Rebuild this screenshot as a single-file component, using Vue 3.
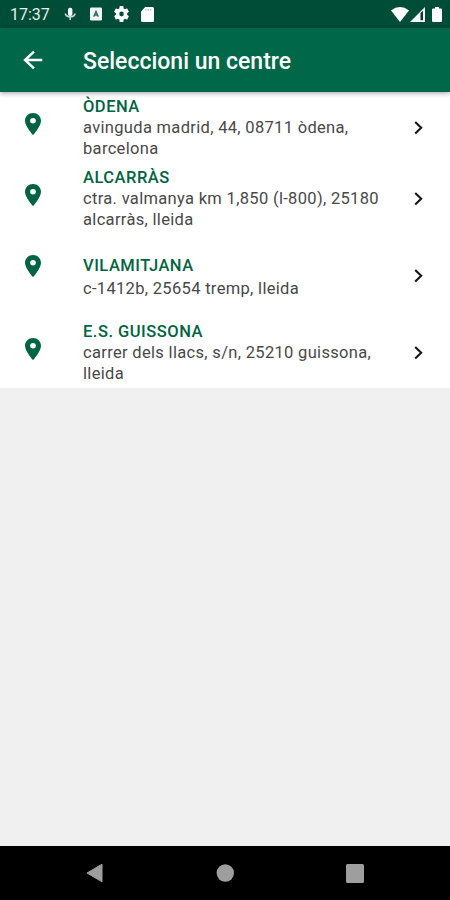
<template>
  <div class="screen">
    <!-- Barra d'estat -->
    <div class="status-bar">
      <span class="time">17:37</span>
      <svg class="status-mic" width="12" height="14" viewBox="0 0 12 14">
        <rect x="4" y="0.8" width="4.4" height="8.2" rx="2" fill="#fff" />
        <path d="M1.2 6.5 Q2.2 9.8 6.2 9.8 T11.2 6.5 M6.2 9.5 V13" fill="none" stroke="#c3d6cf" stroke-width="1.6" />
      </svg>
      <svg class="status-app" width="12" height="14" viewBox="0 0 12 14">
        <rect y="0.5" width="12" height="13" rx="1.3" fill="#f1f5f3" />
        <path d="M3.7 9.8 L6 4.4 L8.3 9.8 M4.6 8 H7.4" fill="none" stroke="#2a6854" stroke-width="1.3" />
      </svg>
      <svg class="status-gear" width="15" height="16" viewBox="2 2 20 20" preserveAspectRatio="none">
        <path
          fill="#fff"
          d="M19.43 12.98c.04-.32.07-.64.07-.98s-.03-.66-.07-.98l2.11-1.65c.19-.15.24-.42.12-.64l-2-3.46c-.12-.22-.39-.3-.61-.22l-2.49 1c-.52-.4-1.08-.73-1.69-.98l-.38-2.65A.488.488 0 0 0 14 2h-4c-.25 0-.46.18-.49.42l-.38 2.65c-.61.25-1.17.59-1.69.98l-2.49-1c-.23-.09-.49 0-.61.22l-2 3.46c-.13.22-.07.49.12.64l2.11 1.65c-.04.32-.07.65-.07.98s.03.66.07.98l-2.11 1.65c-.19.15-.24.42-.12.64l2 3.46c.12.22.39.3.61.22l2.49-1c.52.4 1.08.73 1.69.98l.38 2.65c.03.24.24.42.49.42h4c.25 0 .46-.18.49-.42l.38-2.65c.61-.25 1.17-.59 1.69-.98l2.49 1c.23.09.49 0 .61-.22l2-3.46c.12-.22.07-.49-.12-.64l-2.11-1.65zM12 15a3 3 0 1 1 0-6 3 3 0 0 1 0 6z"
        />
      </svg>
      <svg class="status-card" width="13" height="15" viewBox="0 0 13 15">
        <path d="M4.2 0 H11.5 Q13 0 13 1.5 V13.5 Q13 15 11.5 15 H1.5 Q0 15 0 13.5 V4.4 Z" fill="#fff" />
        <path d="M4.8 2 V3.6 M7.3 2 V3.6 M9.8 2 V3.6" stroke="#b3c9c1" stroke-width="1.4" />
      </svg>
      <div class="spacer"></div>
      <svg class="status-wifi" width="18" height="15" viewBox="0 0 18 15">
        <path d="M0 3.5 Q9 -3.3 18 3.5 L9 15 Z" fill="#fff" />
      </svg>
      <svg class="status-signal" width="15" height="15" viewBox="0 0 15 15">
        <path d="M0 15 L15 0 V15 Z" fill="#f4f8f6" />
        <path d="M10.5 6 L13 3.8 V13.2 H10.5 Z" fill="#14372b" />
      </svg>
      <svg class="status-battery" width="10" height="15" viewBox="0 0 10 15">
        <path d="M3 0 H7 V1.6 H8.8 Q10 1.6 10 2.8 V13.8 Q10 15 8.8 15 H1.2 Q0 15 0 13.8 V2.8 Q0 1.6 1.2 1.6 H3 Z" fill="#fff" />
      </svg>
    </div>

    <!-- Capçalera -->
    <header class="toolbar">
      <button class="back" aria-label="Enrere">
        <svg width="20" height="20" viewBox="0 0 20 20">
          <path d="M19.3 10 H2 M11 1.6 L2 10 L11 18.4" fill="none" stroke="#fff" stroke-width="2.4" />
        </svg>
      </button>
      <h1>Seleccioni un centre</h1>
    </header>

    <!-- Llista de centres -->
    <ul class="centres">
      <li v-for="centre in centres" :key="centre.name" class="centre" :class="{ short: centre.short }">
        <svg class="pin" width="16" height="22" viewBox="5 2 14 20" preserveAspectRatio="none">
          <path
            fill="#006341"
            d="M12 2C8.13 2 5 5.13 5 9c0 5.25 7 13 7 13s7-7.75 7-13c0-3.87-3.13-7-7-7zm0 9.5a2.5 2.5 0 0 1 0-5 2.5 2.5 0 0 1 0 5z"
          />
        </svg>
        <div class="info">
          <div class="name">{{ centre.name }}</div>
          <div class="address">{{ centre.address }}</div>
        </div>
        <svg class="chevron" width="9" height="14" viewBox="0 0 9 14">
          <path d="M1.2 1 L7.2 6.8 L1.2 12.6" fill="none" stroke="#161616" stroke-width="2.1" />
        </svg>
      </li>
    </ul>

    <!-- Botons de navegació -->
    <nav class="nav-bar">
      <svg width="18" height="20" viewBox="0 0 18 20">
        <path d="M16 1.2 V18.8 L1 10 Z" fill="#9e9e9e" stroke="#9e9e9e" stroke-linejoin="round" />
      </svg>
      <svg width="18" height="18" viewBox="0 0 18 18">
        <circle cx="9.3" cy="9" r="8.7" fill="#9e9e9e" />
      </svg>
      <svg width="18" height="19" viewBox="0 0 18 19">
        <rect width="18" height="19" rx="1.5" fill="#9e9e9e" />
      </svg>
    </nav>
  </div>
</template>

<script setup>
import { ref } from 'vue';

const centres = ref([
  { name: 'ÒDENA', address: 'avinguda madrid, 44, 08711 òdena, barcelona' },
  { name: 'ALCARRÀS', address: 'ctra. valmanya km 1,850 (l-800), 25180 alcarràs, lleida' },
  { name: 'VILAMITJANA', address: 'c-1412b, 25654 tremp, lleida', short: true },
  { name: 'E.S. GUISSONA', address: 'carrer dels llacs, s/n, 25210 guissona, lleida' },
]);
</script>

<style>
body {
  margin: 0;
}
</style>

<style scoped>
.screen {
  display: flex;
  flex-direction: column;
  width: 450px;
  height: 900px;
  overflow: hidden;
  background: #f0f0f0;
  font-family: Roboto, sans-serif;
}

svg {
  display: block;
  flex: none;
}

/* Barra d'estat */
.status-bar {
  display: flex;
  align-items: center;
  flex: none;
  box-sizing: border-box;
  height: 28px;
  padding: 0 8px 0 10px;
  background: #004d37;
  color: #e6eeeb;
}

.time {
  width: 54px;
  padding-top: 2px;
  font-size: 16px;
  line-height: 28px;
}

.status-app {
  margin-left: 14px;
}

.status-gear {
  margin-left: 12px;
}

.status-card {
  margin-left: 12px;
}

.spacer {
  flex: 1;
}

.status-signal {
  margin-left: 1px;
}

.status-battery {
  margin-left: 7px;
}

/* Capçalera */
.toolbar {
  display: flex;
  align-items: center;
  flex: none;
  height: 64px;
  background: #006848;
  box-shadow: 0 1px 5px rgba(0, 0, 0, 0.4);
  z-index: 1;
}

.back {
  margin: 0 0 0 23px;
  padding: 0;
  width: 60px;
  border: none;
  background: none;
}

h1 {
  margin: 4px 0 0;
  color: #fff;
  font-size: 23px;
  font-weight: 500;
  line-height: 28px;
}

/* Llista */
.centres {
  flex: none;
  margin: 0;
  padding: 0;
  list-style: none;
  background: #fff;
}

.centre {
  display: flex;
  align-items: center;
  height: 71px;
  padding: 0 27px 0 24.5px;
}

.centre.short {
  height: 83px;
}

.pin {
  align-self: flex-start;
  margin-top: 21px;
}

.info {
  flex: 1;
  margin-left: 42.5px;
}

.name {
  color: #006341;
  font-size: 16.5px;
  font-weight: 500;
  letter-spacing: 0.5px;
  line-height: 21px;
}

.address {
  width: 310px;
  color: #484848;
  font-size: 16.5px;
  letter-spacing: 0.32px;
  line-height: 21px;
}

.short .info {
  padding-top: 2px;
}

.short .address {
  margin-top: 2px;
}

/* Navegació */
.nav-bar {
  display: flex;
  align-items: center;
  justify-content: space-between;
  flex: none;
  box-sizing: border-box;
  height: 54px;
  margin-top: auto;
  padding: 0 86px;
  background: #000;
}
</style>
